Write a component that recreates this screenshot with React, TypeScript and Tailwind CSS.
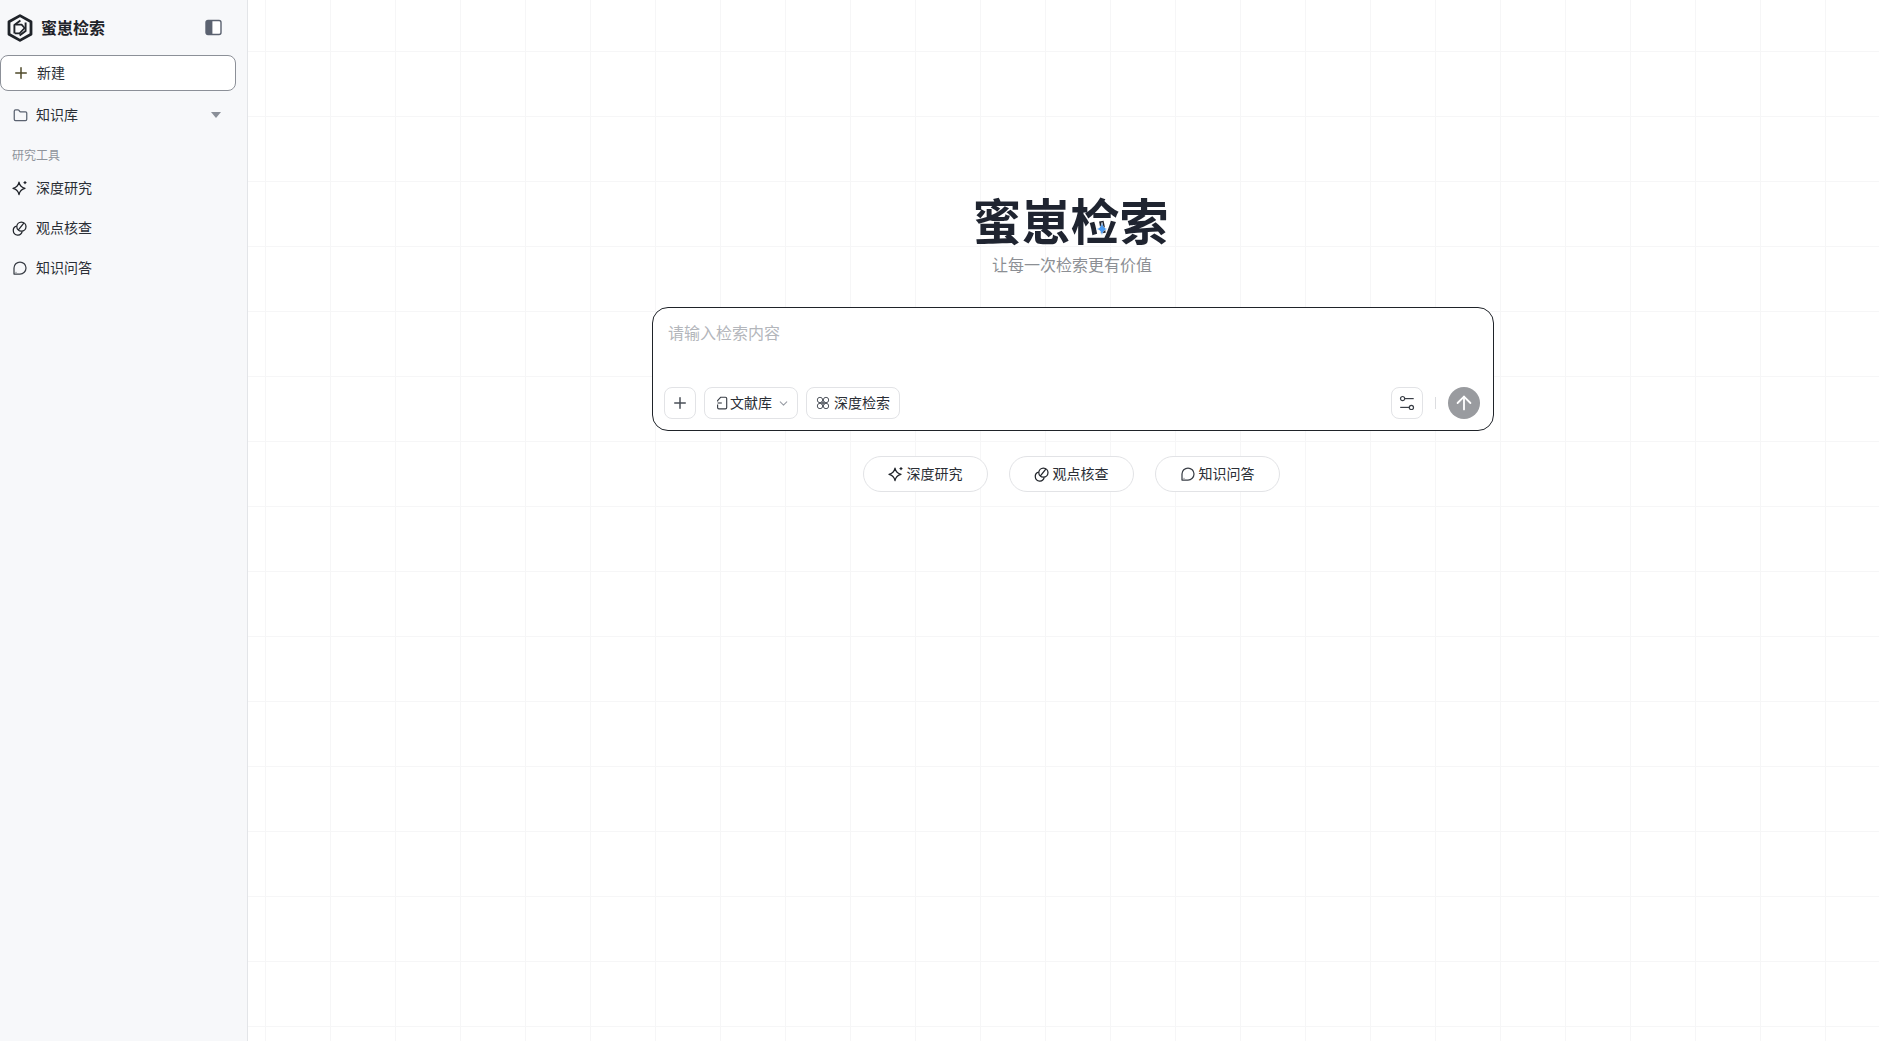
import { ChevronDown, Folder, Plus, ArrowUp } from "lucide-react";

const cjk = "font-['Inter','Noto_Sans_CJK_SC',sans-serif]";

function Logo() {
  return (
    <svg width="28" height="28" viewBox="0 0 28 28" fill="none" stroke="#1f2329" strokeWidth="2.8" strokeLinejoin="round">
      <path d="M14 1.6 25 7.8v12.4l-11 6.2-11-6.2V7.8z" />
      <path d="M8.4 19.4V11l6-4.6" strokeWidth="1.9" />
      <path d="M19.6 8.6v8.4l-6 4.6" strokeWidth="1.9" />
      <path d="M9.6 10.6h6l3 3.4-5 5.4H8.8" strokeWidth="1.7" />
    </svg>
  );
}

function PanelIcon() {
  return (
    <svg width="17" height="17" viewBox="0 0 17 17" fill="none">
      <rect x="1" y="1.5" width="15" height="14" rx="2" fill="#fff" stroke="#5b6270" strokeWidth="1.4" />
      <path d="M3 1.5h4.4v14H3a2 2 0 0 1-2-2v-10a2 2 0 0 1 2-2z" fill="#5b6270" />
    </svg>
  );
}

function SparkIcon({ size = 16 }: { size?: number }) {
  return (
    <svg width={size} height={size} viewBox="0 0 16 16" fill="none" stroke="#1f2329" strokeWidth="1.25" strokeLinejoin="round" strokeLinecap="round">
      <path d="M7 2.2C7.8 6 9.2 7.6 13 8.4 9.2 9.2 7.8 10.8 7 14.6 6.2 10.8 4.8 9.2 1 8.4 4.8 7.6 6.2 6 7 2.2z" />
      <path d="M13 1.6v2M12 2.6h2" />
    </svg>
  );
}

function CheckIcon({ size = 16 }: { size?: number }) {
  return (
    <svg width={size} height={size} viewBox="0 0 16 16" fill="none" stroke="#1f2329" strokeWidth="1.25">
      <circle cx="9.4" cy="6.6" r="4.6" />
      <path d="M4.6 6.2a4.5 4.5 0 1 0 5.6 5.2" />
      <path d="M6.2 10.2 11.8 3.2" />
    </svg>
  );
}

function ChatIcon({ size = 16 }: { size?: number }) {
  return (
    <svg width={size} height={size} viewBox="0 0 16 16" fill="none" stroke="#3a3f47" strokeWidth="1.25" strokeLinejoin="round">
      <path d="M2 14V8a6 6 0 1 1 6 6z" />
      <circle cx="4" cy="12.2" r="0.5" fill="#3a3f47" stroke="none" />
    </svg>
  );
}

function KnotIcon() {
  return (
    <svg width="14" height="14" viewBox="0 0 14 14" fill="none" stroke="#4a4f57" strokeWidth="0.95">
      <circle cx="4" cy="4" r="2.7" />
      <circle cx="10" cy="4" r="2.7" />
      <circle cx="4" cy="10" r="2.7" />
      <circle cx="10" cy="10" r="2.7" />
      <path d="M5.2 5.8 8.8 8.2M8.8 5.8 5.2 8.2" />
    </svg>
  );
}

function DocIcon() {
  return (
    <svg width="14" height="14" viewBox="0 0 14 14" fill="none" stroke="#3a3f47" strokeWidth="1.15" strokeLinejoin="round">
      <path d="M2.6 5.4V4.6L5.8 1.2h4.6a1.3 1.3 0 0 1 1.3 1.3v9a1.3 1.3 0 0 1-1.3 1.3H3.9a1.3 1.3 0 0 1-1.3-1.3V8.6" />
      <path d="M2.6 7h4.2" />
    </svg>
  );
}

function SlidersIcon() {
  return (
    <svg width="16" height="16" viewBox="0 0 16 16" fill="none" stroke="#3a3f47" strokeWidth="1.2">
      <circle cx="3.6" cy="3.6" r="2.1" />
      <path d="M5.7 3.6h9" />
      <circle cx="12.4" cy="12.4" r="2.1" />
      <path d="M1.2 12.4h9.1" />
    </svg>
  );
}

const tools = [
  { label: "深度研究", icon: SparkIcon },
  { label: "观点核查", icon: CheckIcon },
  { label: "知识问答", icon: ChatIcon },
];

function Sidebar() {
  return (
    <aside className="flex w-[248px] shrink-0 flex-col border-r border-[#e3e5e8] bg-[#f7f8fa]">
      <div className="flex h-[55px] items-center pl-[6px] pr-[25px]">
        <Logo />
        <span className="ml-[7px] flex-1 text-base font-bold text-[#1f2329]">蜜崽检索</span>
        <PanelIcon />
      </div>
      <button className="mr-[11px] flex h-[36px] items-center rounded-lg border border-[#8c9098] bg-white pl-[11px] text-sm text-[#2a2e35]">
        <Plus size={18} className="text-[#4f4a2a]" />
        <span className="ml-[7px]">新建</span>
      </button>
      <div className="mt-[4px] flex h-[40px] items-center pl-[13px] pr-[26px] text-sm text-[#2a2e35]">
        <Folder size={15} className="text-[#5b6270]" />
        <span className="ml-[8px] flex-1">知识库</span>
        <span className="h-0 w-0 border-x-[5px] border-t-[6px] border-x-transparent border-t-[#8a8f98]" />
      </div>
      <div className="mt-[11px] pl-[12px] text-xs leading-[20px] text-[#8f949c]">研究工具</div>
      <div className="mt-[2px] flex flex-col">
        {tools.map((t) => (
          <div key={t.label} className="flex h-[40px] items-center pl-[12px] text-sm text-[#2a2e35]">
            <t.icon size={16} />
            <span className="ml-[8px]">{t.label}</span>
          </div>
        ))}
      </div>
    </aside>
  );
}

function SearchBox() {
  return (
    <div className="ml-[2px] mt-[30px] flex h-[124px] w-[842px] flex-col justify-between rounded-2xl border border-[#1f2329] bg-white pb-[11px] pl-[11px] pr-[13px] pt-[13px]">
      <div className="pl-[4px] text-base leading-[24px] text-[#b3b6bb]">请输入检索内容</div>
      <div className="flex items-center">
        <button className="flex h-[32px] w-[32px] items-center justify-center rounded-lg border border-[#e2e3e6]">
          <Plus size={18} className="text-[#4a4f57]" />
        </button>
        <button className="ml-[8px] flex h-[32px] w-[94px] items-center rounded-lg border border-[#e2e3e6] pl-[10px] text-sm text-[#2a2e35]">
          <DocIcon />
          <span className="ml-[1px]">文献库</span>
          <ChevronDown size={13} className="ml-[5px] text-[#9a9ea6]" />
        </button>
        <button className="ml-[8px] flex h-[32px] w-[94px] items-center rounded-lg border border-[#e2e3e6] pl-[9px] text-sm text-[#2a2e35]">
          <KnotIcon />
          <span className="ml-[4px]">深度检索</span>
        </button>
        <button className="ml-auto flex h-[32px] w-[32px] items-center justify-center rounded-lg border border-[#e2e3e6]">
          <SlidersIcon />
        </button>
        <span className="ml-[12px] h-[12px] w-px bg-[#dcdde0]" />
        <button className="ml-[12px] flex h-[32px] w-[32px] items-center justify-center rounded-full bg-[#999b9f]">
          <ArrowUp size={22} className="text-white" />
        </button>
      </div>
    </div>
  );
}

export default function App() {
  return (
    <div className={`flex h-[1041px] w-full overflow-hidden ${cjk}`}>
      <Sidebar />
      <main className="flex flex-1 flex-col items-center bg-white bg-[linear-gradient(to_right,#f6f6f7_1px,transparent_1px),linear-gradient(to_bottom,#f6f6f7_1px,transparent_1px)] bg-[size:65px_65px] bg-[position:17px_51px] pl-[17px] pt-[191px]">
        <div className="relative mr-[3px] text-[49px] font-bold leading-[64px] text-[#1f2430]">
          蜜崽检索
          <svg width="12" height="14" viewBox="-0.5 -0.5 12 14" className="absolute left-[124px] top-[31px]">
            <path d="M5.5 0C6 4 7 5.6 11 6.5 7 7.4 6 9 5.5 13 5 9 4 7.4 0 6.5 4 5.6 5 4 5.5 0z" fill="#4a9cf5" stroke="#fff" strokeWidth="0.8" paintOrder="stroke" />
          </svg>
        </div>
        <div className="mt-[-2px] text-base leading-[24px] text-[#8c8f94]">让每一次检索更有价值</div>
        <SearchBox />
        <div className="mr-[2px] mt-[25px] flex gap-[21px]">
          {tools.map((t) => (
            <button key={t.label} className="flex h-[36px] w-[125px] items-center justify-center gap-[3px] rounded-full border border-[#e2e3e6] bg-white text-sm text-[#2a2e35]">
              <t.icon size={16} />
              {t.label}
            </button>
          ))}
        </div>
      </main>
    </div>
  );
}
